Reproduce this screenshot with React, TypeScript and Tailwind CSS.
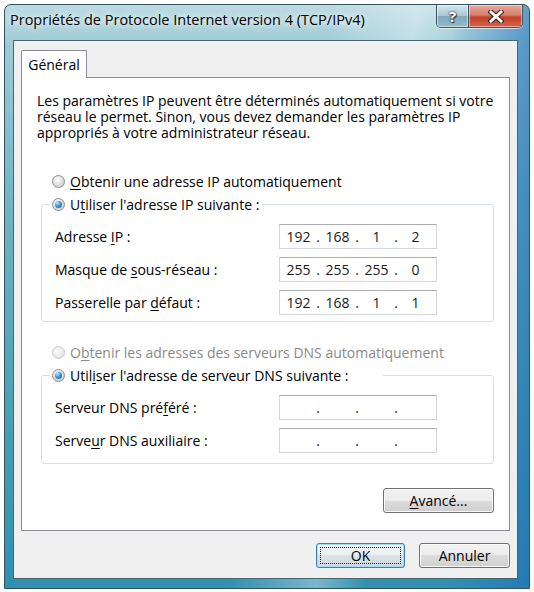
import React from "react";

function U({ children }: { children: React.ReactNode }) {
  return <span className="underline decoration-1 underline-offset-[2px]">{children}</span>;
}

function Radio({ checked = false, disabled = false }: { checked?: boolean; disabled?: boolean }) {
  return (
    <span
      className={
        disabled
          ? "flex h-[13px] w-[13px] shrink-0 items-center justify-center rounded-full border border-[#c9cacc] bg-[radial-gradient(circle_at_40%_35%,#fbfbfb_0%,#e4e4e4_75%)]"
          : "flex h-[13px] w-[13px] shrink-0 items-center justify-center rounded-full border border-[#8b8e93] bg-[radial-gradient(circle_at_40%_35%,#ffffff_0%,#dcdcdc_55%,#c6c6c6_100%)]"
      }
    >
      {checked && (
        <span className="h-[7px] w-[7px] rounded-full bg-[radial-gradient(circle_at_35%_30%,#c4ecff_0%,#3f9fe2_40%,#0c579f_100%)]" />
      )}
    </span>
  );
}

function IpBox({ parts }: { parts: string[] }) {
  return (
    <div className="flex h-[25px] w-[158px] items-center border border-[#d3d6db] border-t-[#abadb3] bg-white text-[#1b1b1b]">
      {parts.map((p, i) => (
        <React.Fragment key={i}>
          {i > 0 && <span className="flex w-[2px] justify-center">.</span>}
          <span className="w-[37px] text-center">{p}</span>
        </React.Fragment>
      ))}
    </div>
  );
}

function Btn({ children, w, def = false }: { children: React.ReactNode; w: string; def?: boolean }) {
  return (
    <div
      className={
        def
          ? `relative flex h-[25px] ${w} items-center justify-center rounded-[3px] border border-[#3c7fb1] bg-[linear-gradient(180deg,#f2f6f8_0%,#eaeff2_50%,#dbe3e8_50%,#ced8de_100%)] shadow-[inset_0_0_0_1px_#a8dcf3]`
          : `relative flex h-[25px] ${w} items-center justify-center rounded-[3px] border border-[#707070] bg-[linear-gradient(180deg,#f2f2f2_0%,#ebebeb_50%,#dddddd_50%,#cfcfcf_100%)] shadow-[inset_0_0_0_1px_rgba(255,255,255,0.85)]`
      }
    >
      {def && <span className="absolute inset-[3px] border border-dotted border-[#222]" />}
      <span className="relative">{children}</span>
    </div>
  );
}

export default function App() {
  return (
    <div className="h-[592px] w-[534px] overflow-hidden bg-white pl-[4px] pt-[4px] font-['Open_Sans',sans-serif] text-[14px] text-black">
      <div className="flex h-[585px] w-[526px] flex-col rounded-t-[7px] border border-[#35525c] bg-[linear-gradient(100deg,rgba(255,255,255,0)_52%,rgba(255,255,255,0.35)_66%,rgba(255,255,255,0)_74%),linear-gradient(90deg,rgba(0,0,0,0)_85%,rgba(25,105,185,0.55)_100%),linear-gradient(180deg,#bcdbe2_0%,#9ccbd6_7%,#6fb4c4_35%,#4aa0b4_70%,#3190b0_100%)] pb-[9px] pl-[8px] pr-[11px]">
        {/* Title bar */}
        <div className="-ml-[8px] -mr-[11px] flex h-[35px] items-start justify-between">
          <span className="ml-[5px] mt-[5px] whitespace-nowrap text-[14.5px] leading-[20px] [text-shadow:0_0_6px_#ffffff,0_0_10px_rgba(255,255,255,0.9)]">
            Propriétés de Protocole Internet version 4 (TCP/IPv4)
          </span>
          <div className="mr-[6px] flex h-[23px] overflow-hidden rounded-b-[5px] border border-t-0 border-[#3d5660] shadow-[0_1px_0_rgba(255,255,255,0.6)]">
            <div className="flex w-[32px] items-center justify-center border-r border-[#3d5660] bg-[linear-gradient(180deg,#d4e6ec_0%,#a9c8d4_48%,#7fa9bb_52%,#8fbccc_100%)] shadow-[inset_0_0_0_1px_rgba(255,255,255,0.5)]">
              <span className="text-[15px] font-bold leading-none text-white [text-shadow:0_0_1px_#223,0_0_2px_#223,1px_1px_1px_#334]">?</span>
            </div>
            <div className="flex w-[53px] items-center justify-center bg-[linear-gradient(180deg,#e8a99b_0%,#d98170_45%,#c2412a_55%,#d6614a_100%)] shadow-[inset_0_0_0_1px_rgba(255,255,255,0.45)]">
              <svg width="16" height="13" viewBox="0 0 16 13">
                <path d="M3 2 L13 11 M13 2 L3 11" stroke="#3a1c16" strokeWidth="5" strokeLinecap="square" fill="none" />
                <path d="M3 2 L13 11 M13 2 L3 11" stroke="#ffffff" strokeWidth="3" strokeLinecap="square" fill="none" />
              </svg>
            </div>
          </div>
        </div>

        {/* Client area */}
        <div className="flex h-[539px] flex-col border border-[#45666f] bg-[#f0f0f0] px-[7px] pb-[10px] pt-[9px]">
          {/* Tab */}
          <div className="relative z-10 flex h-[28px] w-[66px] items-center justify-center rounded-t-[2px] border border-b-0 border-[#898c95] bg-white">
            Général
          </div>
          {/* Panel */}
          <div className="-mt-[1px] flex h-[454px] flex-col border border-[#898c95] bg-white px-[15px] pt-[15px]">
            <p className="whitespace-nowrap leading-[16px]">
              Les paramètres IP peuvent être déterminés automatiquement si votre
              <br />
              réseau le permet. Sinon, vous devez demander les paramètres IP
              <br />
              appropriés à votre administrateur réseau.
            </p>

            <div className="ml-[15px] mt-[32px] flex h-[16px] items-center gap-[5px]">
              <Radio />
              <span className="whitespace-nowrap">
                <U>O</U>btenir une adresse IP automatiquement
              </span>
            </div>

            <fieldset className="ml-[4px] mt-[7px] rounded-[3px] border border-[#d5dfe5] pb-[6px]">
              <legend className="ml-[8px] w-[212px] pl-[2px]">
                <span className="flex h-[16px] items-center gap-[5px] whitespace-nowrap">
                  <Radio checked />
                  <span>
                    U<U>t</U>iliser l'adresse IP suivante :
                  </span>
                </span>
              </legend>
              <div className="ml-[13px] mt-[12px] grid grid-cols-[224px_158px] items-center gap-y-[8px]">
                <span>
                  Adresse <U>I</U>P :
                </span>
                <IpBox parts={["192", "168", "1", "2"]} />
                <span>
                  Masque de <U>s</U>ous-réseau :
                </span>
                <IpBox parts={["255", "255", "255", "0"]} />
                <span>
                  Passerelle par <U>d</U>éfaut :
                </span>
                <IpBox parts={["192", "168", "1", "1"]} />
              </div>
            </fieldset>

            <div className="ml-[15px] mt-[22px] flex h-[16px] items-center gap-[5px] text-[#8a8a8a]">
              <Radio disabled />
              <span className="whitespace-nowrap">
                O<U>b</U>tenir les adresses des serveurs DNS automatiquement
              </span>
            </div>

            <fieldset className="ml-[4px] mt-[7px] rounded-[3px] border border-[#d5dfe5] pb-[10px]">
              <legend className="ml-[8px] w-[333px] pl-[2px]">
                <span className="flex h-[16px] items-center gap-[5px] whitespace-nowrap">
                  <Radio checked />
                  <span>
                    Util<U>i</U>ser l'adresse de serveur DNS suivante :
                  </span>
                </span>
              </legend>
              <div className="ml-[13px] mt-[12px] grid grid-cols-[224px_158px] items-center gap-y-[8px]">
                <span>
                  Serveur DNS pré<U>f</U>éré :
                </span>
                <IpBox parts={["", "", "", ""]} />
                <span>
                  Serve<U>u</U>r DNS auxiliaire :
                </span>
                <IpBox parts={["", "", "", ""]} />
              </div>
            </fieldset>

            <div className="mt-[24px] flex justify-end">
              <Btn w="w-[111px]">
                <U>A</U>vancé...
              </Btn>
            </div>
          </div>

          {/* Bottom buttons */}
          <div className="mt-[12px] flex justify-end gap-[14px]">
            <Btn w="w-[89px]" def>
              OK
            </Btn>
            <Btn w="w-[91px]">Annuler</Btn>
          </div>
        </div>
      </div>
    </div>
  );
}
